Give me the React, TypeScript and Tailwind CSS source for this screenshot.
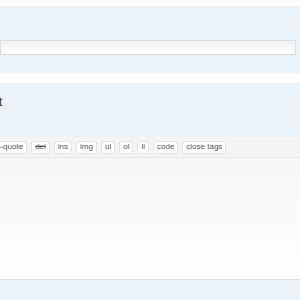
import React from 'react';

const tags = ['b-quote', 'del', 'ins', 'img', 'ul', 'ol', 'li', 'code', 'close tags'];

const App: React.FC = () => {
    return (
        <div className="w-[300px] h-[300px] overflow-hidden bg-white font-['Liberation_Sans',Arial,sans-serif] text-[#333]">
            <div className="pt-[6px]">
                <div className="h-[67px] bg-[#ebf3f9] pt-[34px] pr-[4px]">
                    <div className="h-[15px] border border-[#d9dcde] bg-gradient-to-b from-[#f3f3f3] to-white"></div>
                </div>
            </div>
            <div className="mt-[10px] bg-[#ebf3f9]">
                <div className="h-[54px] pt-[11px]">
                    <span className="block ml-[-54px] text-[13px] leading-[16px] text-[#333]">Comment</span>
                </div>
                <div className="flex items-center gap-[4px] h-[21px] bg-[#f4f4f4] border-b border-[#e6e6e6] ml-[-8px] pl-0">
                    {tags.map((t) => (
                        <span
                            key={t}
                            className={`h-[13px] px-[3px] flex items-center bg-white border border-[#e4e4e4] rounded-[2px] text-[8px] leading-none text-[#555] ${t === 'del' ? 'line-through' : ''}`}
                        >
                            {t}
                        </span>
                    ))}
                </div>
                <div className="h-[122px] bg-gradient-to-b from-[#f6f6f6] to-white border-b border-[#dcdfe2]"></div>
                <div className="h-[20px]"></div>
            </div>
        </div>
    );
};

export default App;
